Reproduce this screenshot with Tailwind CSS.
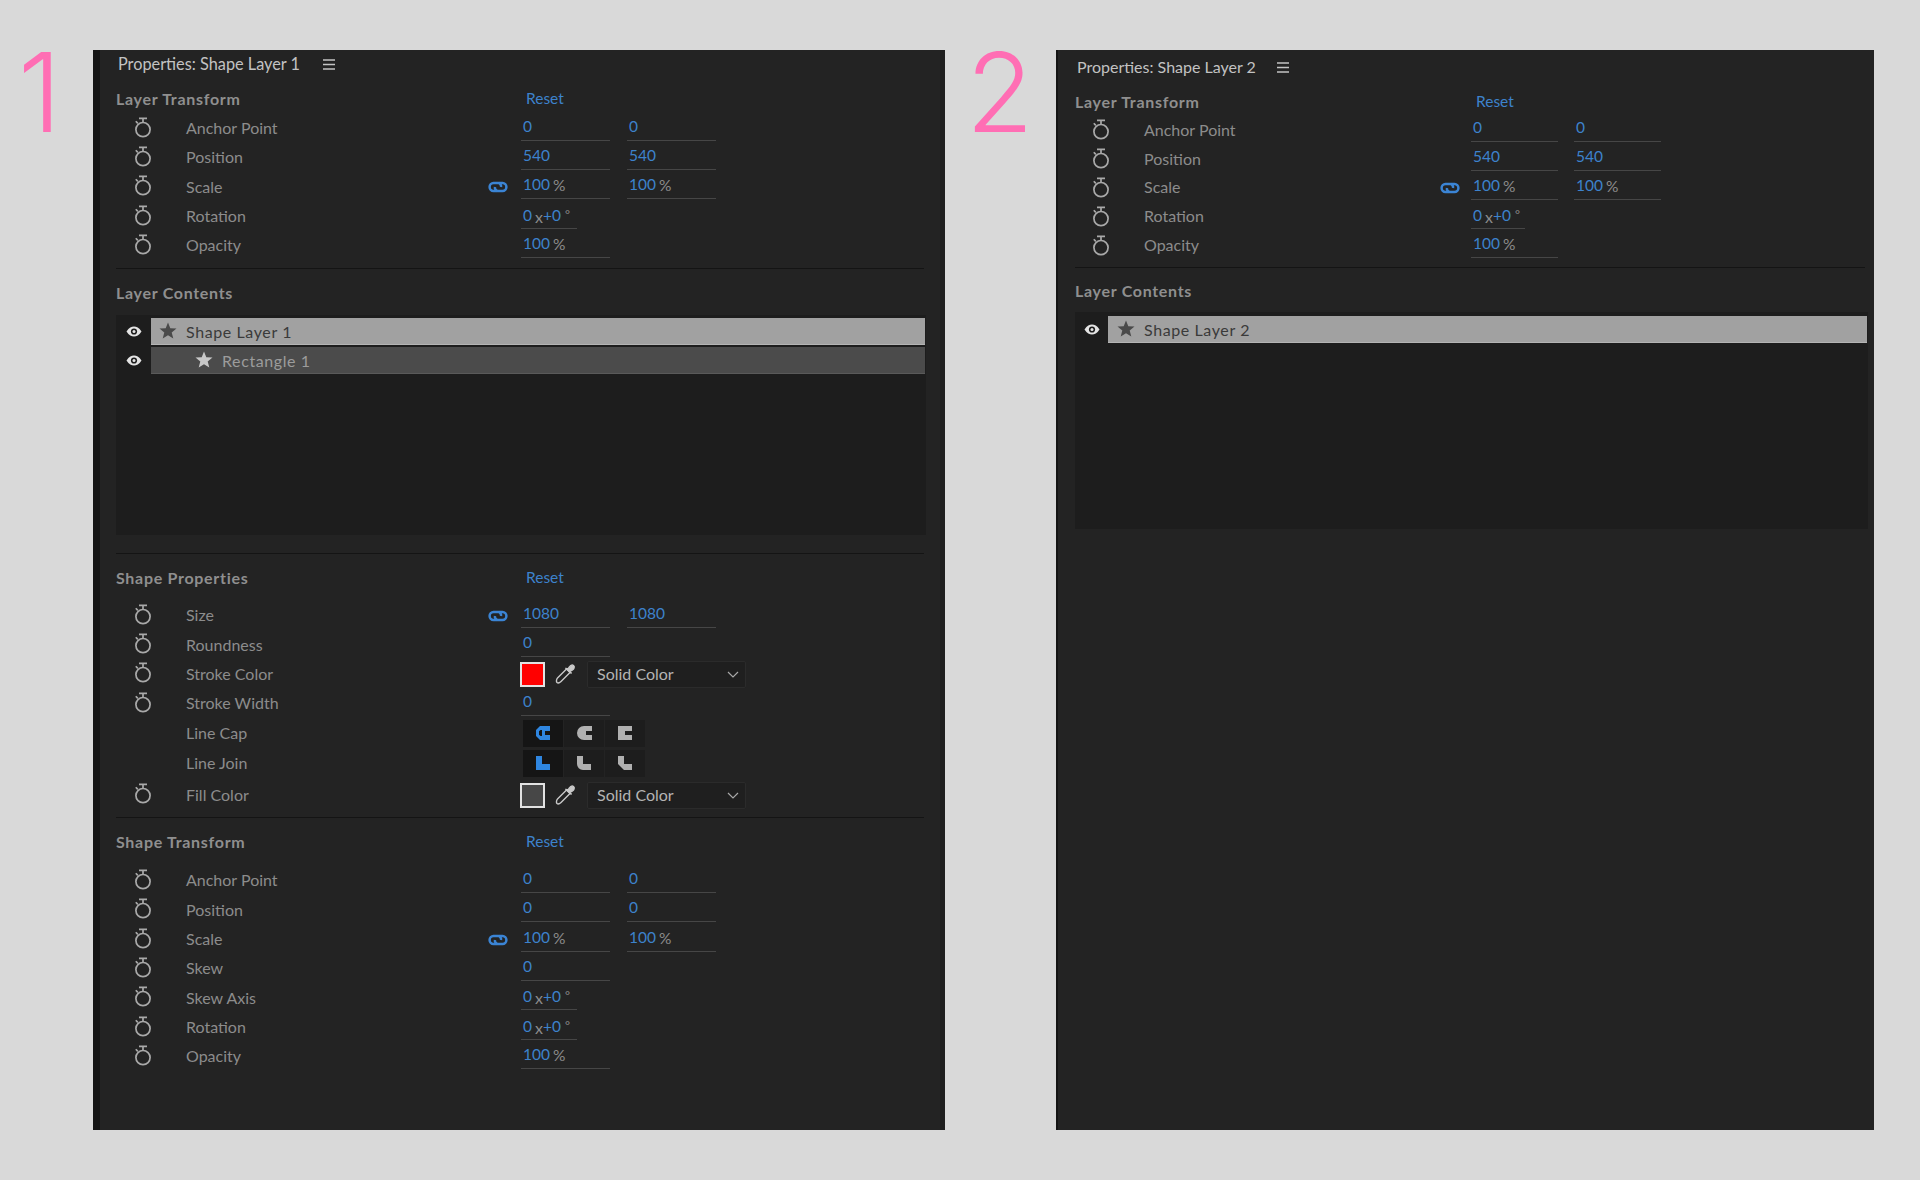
<!DOCTYPE html>
<html lang="en">
<head>
    <meta charset="UTF-8">
    <meta name="viewport" content="width=device-width, initial-scale=1.0">
    <title>Properties panels</title>
    <script src="https://cdn.jsdelivr.net/npm/@tailwindcss/browser@4"></script>
</head>
<body class="bg-[#d9d9d9]">
    <div id="root" class="flex h-[1180px] w-[1920px] pt-[50px] pb-[50px] font-['Lato',sans-serif] text-[16px] text-[#8c8c8c]">
        <div class="w-[93px] shrink-0 pl-[18px] -mt-[13px] font-['Inter',sans-serif] font-light text-[110px] leading-[110px] text-[#ff6eb4]">1</div>
        <div id="panel1" class="w-[852px] shrink-0 border-l-[7px] border-r-[5px] border-l-[#141414] border-r-[#1e1e1e] bg-[#232323] pl-[16px] pr-[16px]"></div>
        <div class="w-[111px] shrink-0 pl-[21px] -mt-[13px] font-['Inter',sans-serif] font-light text-[110px] leading-[110px] text-[#ff6eb4]">2</div>
        <div id="panel2" class="w-[818px] shrink-0 border-l-[2px] border-l-[#141414] bg-[#232323] pl-[17px] pr-[9px]"></div>
    </div>
    <script>
        const watch = `<svg class="-mt-[3px]" width="18" height="21" viewBox="0 0 18 21" fill="none" stroke="#a9a9a9" stroke-width="1.7"><circle cx="9" cy="12.6" r="7.1"/><path d="M5 1.4H13M9 1.4V5.5M1.8 4.2L3.8 6.4"/></svg>`;
        const link = `<svg width="20" height="12" viewBox="0 0 20 12" fill="none" stroke="#3b84d4" stroke-width="2.5"><path d="M9 9.900H5.500A3.900 3.900 0 0 1 5.500 2.100H10.500A3.200 3.200 0 0 1 13 6"/><path d="M11 2.100H14.500A3.900 3.900 0 0 1 14.500 9.900H9.500A3.200 3.200 0 0 1 7 6"/></svg>`;
        const eye = `<svg width="16" height="11" viewBox="0 0 16 11"><path fill="#e4e4e4" d="M0.5 5.5C3 1.5 5.5 0.5 8 0.5S13 1.5 15.5 5.5C13 9.5 10.5 10.5 8 10.5S3 9.5 0.5 5.5Z"/><circle cx="8" cy="5.5" r="3.1" fill="#1d1d1d"/><circle cx="8" cy="5.5" r="1.5" fill="#e4e4e4"/></svg>`;
        const star = (color) => `<svg width="18" height="17" viewBox="0 0 18 17"><path fill="${color}" d="M9 0.5L11.3 6.2L17.5 6.6L12.7 10.6L14.3 16.5L9 13.3L3.7 16.5L5.3 10.6L0.5 6.6L6.7 6.2Z"/></svg>`;
        const burger = `<svg width="12" height="11" viewBox="0 0 12 11" stroke="#c4c4c4" stroke-width="1.5"><path d="M0 1H12M0 5.5H12M0 10H12"/></svg>`;
        const dropper = `<svg width="22" height="22" viewBox="0 0 22 22" fill="none" stroke="#c9c9c9" stroke-width="1.4"><path d="M12.5 6L16 9.5L7 18.5C6 19.5 4 20.5 3 19.5S2.500 16 3.500 15Z"/><path fill="#c9c9c9" d="M11.500 5L13.500 6.500L15 4.500C16 3 18 1.500 19.500 2.500S20 6 18.500 7L16 8.500L17.500 10.500Z"/></svg>`;
        const chevron = `<svg width="12" height="7" viewBox="0 0 12 7" fill="none" stroke="#a8a8a8" stroke-width="1.2"><path d="M1 1L6 6L11 1"/></svg>`;

        const capIcons = [
            'M5 1H15V6H10V10H15V15H5L1 11V5ZM4 6.200V9.800L5.500 11H7V5H5.500Z',
            'M8 1H16V6H10V10H16V15H8A7 7 0 0 1 8 1Z',
            'M1 1H15V6H8V10H15V15H1Z',
        ];
        const joinIcons = [
            'M1 1H7V9H15V15H1Z',
            'M1 1H7V9H15V15H7A6 6 0 0 1 1 9Z',
            'M1 1H7V9H15V15H7L1 9Z',
        ];

        const blue = (text) => `<span class="text-[#3d82cc]">${text}</span>`;
        const pct = `${blue('100')}<span class="ml-[3px] inline-block translate-y-[1px] text-[#8c8c8c]">%</span>`;
        const turns = `${blue('0')}<span class="ml-[3px] inline-block translate-y-[2px] text-[16px] text-[#8c8c8c]">x</span>${blue('+0')}<span class="ml-[4px] inline-block -translate-y-[2px] text-[12px] text-[#8c8c8c]">°</span>`;

        const panel1 = {
            head: 'h-[28px] pl-[2px] gap-[23px] text-[16.3px]',
            titleCol: 'w-[409px]',
            row: 'h-[29.33px]',
            iconCol: 'w-[70px] pl-[18px]',
            labelCol: 'w-[302px]',
            linkCol: 'w-[33px]',
            val: 'w-[89px]',
            valGap: 'mr-[17px]',
            short: 'w-[56px]',
            eyeCol: 'w-[35px]',
            listRow: 'w-[774px]',
        };
        const panel2 = {
            head: 'h-[34px] pl-[2px] gap-[21px] text-[16px]',
            titleCol: 'w-[400px]',
            row: 'h-[28.8px]',
            iconCol: 'w-[69px] pl-[17px] pt-[2px]',
            labelCol: 'w-[296px]',
            linkCol: 'w-[31px]',
            val: 'w-[87px]',
            valGap: 'mr-[16px]',
            short: 'w-[54px]',
            eyeCol: 'w-[33px]',
            listRow: 'w-[759px]',
        };

        function header(cfg, title) {
            return `<div class="flex items-center text-[#c2c2c2] ${cfg.head}"><span>${title}</span>${burger}</div>`;
        }

        function section(cfg, title, margin, reset) {
            return `<div class="flex h-[28px] items-center ${margin}">
                <div class="font-bold tracking-[0.7px] text-[#8f8f8f] ${cfg.titleCol}">${title}</div>
                ${reset ? `<div class="pl-[1px] text-[15.5px] text-[#3d82cc]">Reset</div>` : ''}
            </div>`;
        }

        function cell(cfg, content, width, extra = '') {
            return `<div class="h-[24px] border-b border-[#464646] pl-[2px] text-[15.5px] leading-[19px] ${width} ${extra}">${content}</div>`;
        }

        function row(cfg, label, opts = {}) {
            const values = opts.custom || [
                opts.a ? cell(cfg, opts.a, opts.shortA ? cfg.short : cfg.val, cfg.valGap) : '',
                opts.b ? cell(cfg, opts.b, cfg.val) : '',
            ].join('');
            return `<div class="flex items-center ${opts.height || cfg.row}">
                <div class="flex items-center ${cfg.iconCol}">${opts.noWatch ? '' : watch}</div>
                <div class="-mt-[1px] ${cfg.labelCol}">${label}</div>
                <div class="${cfg.linkCol}">${opts.linked ? link : ''}</div>
                ${values}
            </div>`;
        }

        function divider(margin) {
            return `<div class="h-[1px] bg-[#141414] ${margin}"></div>`;
        }

        function layerTransform(cfg) {
            return [
                row(cfg, 'Anchor Point', { a: blue('0'), b: blue('0') }),
                row(cfg, 'Position', { a: blue('540'), b: blue('540') }),
                row(cfg, 'Scale', { a: pct, b: pct, linked: true }),
                row(cfg, 'Rotation', { a: turns, shortA: true }),
                row(cfg, 'Opacity', { a: pct }),
            ].join('');
        }

        function listRow(cfg, text, active, indent) {
            const look = active
                ? 'bg-[#a1a1a1] text-[#3a3a3a] border-b border-[#b4b4b4]'
                : 'bg-[#4b4b4b] text-[#9c9c9c] border-b border-[#5a5a5a]';
            return `<div class="flex h-[29px] items-center">
                <div class="flex shrink-0 justify-center ${cfg.eyeCol}">${eye}</div>
                <div class="flex h-[27px] items-center tracking-[0.6px] ${look} ${cfg.listRow} ${indent}">
                    ${star(active ? '#4a4a4a' : '#c8c8c8')}<span class="ml-[9px] pt-[2px]">${text}</span>
                </div>
            </div>`;
        }

        function swatchRow(cfg, label, color) {
            const custom = `<div class="flex items-center -ml-[1px]">
                <div class="h-[25px] w-[25px] border-2 border-[#e2e2e2] ${color}"></div>
                <div class="ml-[9px] w-[22px]">${dropper}</div>
                <div class="ml-[11px] flex h-[27px] w-[159px] items-center justify-between rounded-[2px] border border-[#2b2b2b] bg-[#1f1f1f] pl-[9px] pr-[6px] text-[#b4b4b4]"><span>Solid Color</span>${chevron}</div>
            </div>`;
            return row(cfg, label, { custom });
        }

        function iconButtons(icons) {
            const buttons = icons.map((d, i) => `<div class="flex h-[27px] w-[40px] items-center justify-center ${i === 0 ? 'bg-[#151515]' : 'bg-[#1d1d1d]'}">
                <svg width="16" height="16" viewBox="0 0 16 16"><path fill-rule="evenodd" fill="${i === 0 ? '#2f86e0' : '#b0b0b0'}" d="${d}"/></svg>
            </div>`).join('');
            return `<div class="ml-[2px] flex gap-[1px]">${buttons}</div>`;
        }

        document.getElementById('panel1').innerHTML = [
            header(panel1, 'Properties: Shape Layer 1'),
            section(panel1, 'Layer Transform', 'mt-[7px]', true),
            `<div class="h-[1px]"></div>`,
            layerTransform(panel1),
            divider('mt-[7px]'),
            section(panel1, 'Layer Contents', 'mt-[10px]', false),
            `<div class="mt-[8px] h-[220px] -mr-[2px] bg-[#1d1d1d] pt-[2px]">
                ${listRow(panel1, 'Shape Layer 1', true, 'pl-[8px]')}
                ${listRow(panel1, 'Rectangle 1', false, 'pl-[44px]')}
            </div>`,
            divider('mt-[18px]'),
            section(panel1, 'Shape Properties', 'mt-[10px]', true),
            `<div class="h-[9.500px]"></div>`,
            row(panel1, 'Size', { a: blue('1080'), b: blue('1080'), linked: true }),
            row(panel1, 'Roundness', { a: blue('0') }),
            swatchRow(panel1, 'Stroke Color', 'bg-[#ff0000]'),
            row(panel1, 'Stroke Width', { a: blue('0') }),
            row(panel1, 'Line Cap', { noWatch: true, height: 'h-[30px]', custom: iconButtons(capIcons) }),
            row(panel1, 'Line Join', { noWatch: true, height: 'h-[30px]', custom: iconButtons(joinIcons) }),
            `<div class="pt-[2px]">${swatchRow(panel1, 'Fill Color', 'bg-[#474747]')}</div>`,
            divider('mt-[7px]'),
            section(panel1, 'Shape Transform', 'mt-[10px]', true),
            `<div class="h-[10.500px]"></div>`,
            row(panel1, 'Anchor Point', { a: blue('0'), b: blue('0') }),
            row(panel1, 'Position', { a: blue('0'), b: blue('0') }),
            row(panel1, 'Scale', { a: pct, b: pct, linked: true }),
            row(panel1, 'Skew', { a: blue('0') }),
            row(panel1, 'Skew Axis', { a: turns, shortA: true }),
            row(panel1, 'Rotation', { a: turns, shortA: true }),
            row(panel1, 'Opacity', { a: pct }),
        ].join('');

        document.getElementById('panel2').innerHTML = [
            header(panel2, 'Properties: Shape Layer 2'),
            section(panel2, 'Layer Transform', 'mt-[4px]', true),
            layerTransform(panel2),
            divider('mt-[7px]'),
            section(panel2, 'Layer Contents', 'mt-[9px]', false),
            `<div class="mt-[7px] h-[217px] -mr-[3px] bg-[#1d1d1d] pt-[3px]">
                ${listRow(panel2, 'Shape Layer 2', true, 'pl-[9px]')}
            </div>`,
        ].join('');
    </script>
</body>
</html>
